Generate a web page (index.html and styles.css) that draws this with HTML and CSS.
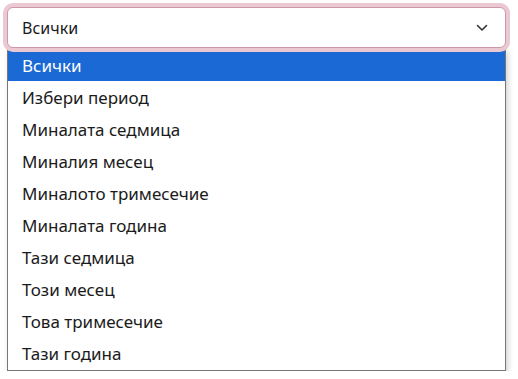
FILE: index.html
```html
<!DOCTYPE html>
<html lang="bg">
<head>
<meta charset="utf-8">
<link rel="stylesheet" href="styles.css">
</head>
<body>
<div class="page">
  <div class="select">
    <span class="value">Всички</span>
    <svg class="chev" width="12" height="8" viewBox="0 0 12 8"><path d="M1.5 1.5 L6 6 L10.5 1.5" fill="none" stroke="#333" stroke-width="1.6" stroke-linecap="round" stroke-linejoin="round"/></svg>
  </div>
  <ul class="list">
    <li class="opt active">Всички</li>
    <li class="opt">Избери период</li>
    <li class="opt">Миналата седмица</li>
    <li class="opt">Миналия месец</li>
    <li class="opt">Миналото тримесечие</li>
    <li class="opt">Миналата година</li>
    <li class="opt">Тази седмица</li>
    <li class="opt">Този месец</li>
    <li class="opt">Това тримесечие</li>
    <li class="opt">Тази година</li>
  </ul>
</div>
</body>
</html>
```
FILE: styles.css
```css
html, body {
  margin: 0;
  padding: 0;
  background: #ffffff;
}
body {
  font-family: "Noto Sans", "Open Sans", sans-serif;
  font-size: 16px;
  color: #1b1b1b;
}
.page {
  padding: 7px 0 0 7px;
  width: 499px;
}
.select {
  box-sizing: border-box;
  height: 41px;
  border: 1px solid #cf98a8;
  border-radius: 6px;
  box-shadow: 0 0 0 4px #ebc9d3, 0 2px 3px rgba(0,0,0,0.12);
  display: flex;
  align-items: center;
  justify-content: space-between;
  padding: 0 17px 0 14px;
  background: #fff;
  position: relative;
  z-index: 1;
}
.value {
  line-height: 20px;
  padding-top: 1px;
}
.chev {
  display: block;
}
.list {
  list-style: none;
  margin: 0;
  padding: 0 0 1px 0;
  box-sizing: border-box;
  border: 1px solid #767676;
  border-top: none;
  background: #fff;
  box-shadow: 2px 3px 6px rgba(0,0,0,0.18);
  font-size: 17px;
}
.opt {
  box-sizing: border-box;
  height: 32px;
  padding-top: 2px;
  line-height: 30px;
  padding-left: 14px;
  white-space: nowrap;
}
.opt.active {
  background: #1a69d4;
  color: #ffffff;
  height: 33px;
  padding-top: 3px;
}
```
